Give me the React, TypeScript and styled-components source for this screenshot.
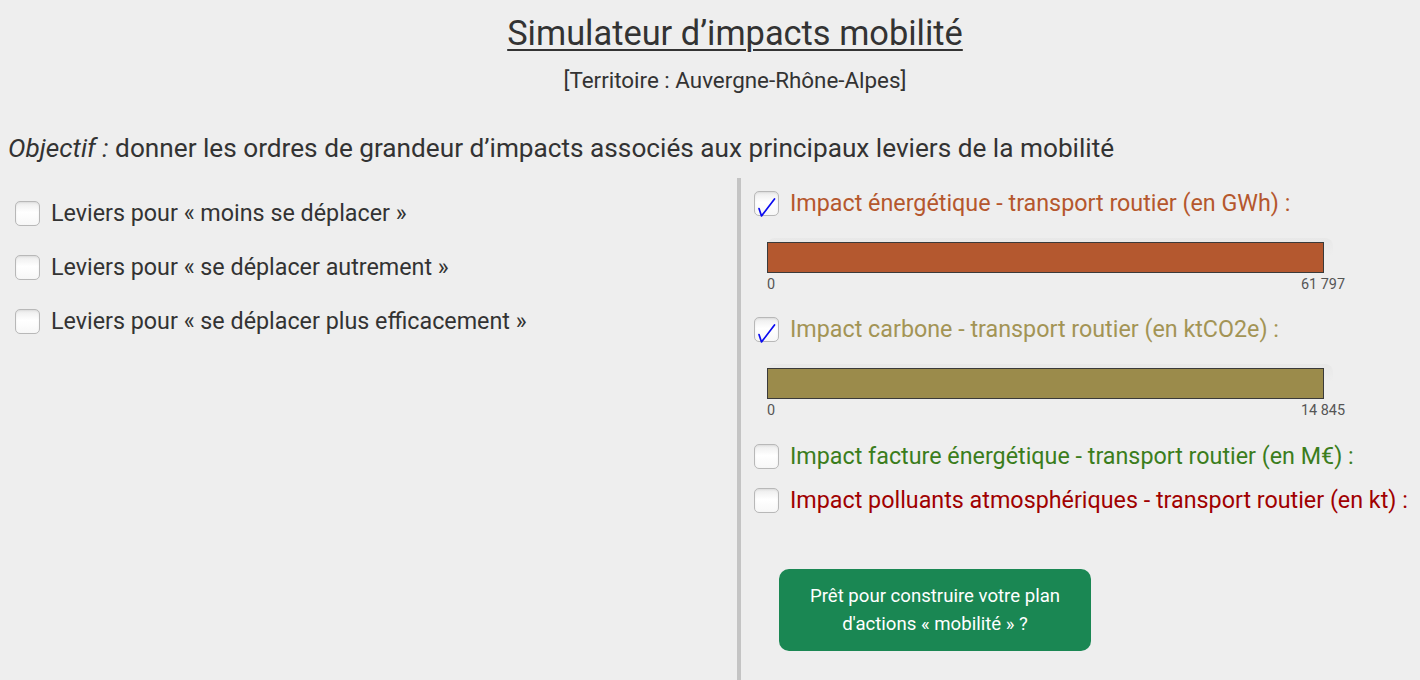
import styled, { createGlobalStyle } from "styled-components";

const GlobalStyle = createGlobalStyle`
  html, body {
    margin: 0;
    background: #eeeeee;
    font-family: Roboto, "Liberation Sans", sans-serif;
    color: #333333;
  }
`;

const Page = styled.div`
  width: 1420px;
  height: 680px;
  overflow: hidden;
  display: flex;
  flex-direction: column;
`;

const Header = styled.header`
  text-align: center;
  padding: 13px 0 0 50px;
`;

const Title = styled.h1`
  margin: 0;
  font-size: 34.4px;
  line-height: 40px;
  font-weight: 400;
  text-decoration: underline;
  text-decoration-thickness: 2px;
  text-underline-offset: 4px;
`;

const Territory = styled.p`
  margin: 14px 0 0;
  font-size: 22.4px;
  line-height: 26px;
`;

const Objective = styled.p`
  margin: 40px 0 0;
  padding-left: 8px;
  font-size: 26.2px;
  line-height: 30px;
  em {
    font-style: italic;
  }
`;

const Main = styled.div`
  flex: 1;
  margin-top: 15px;
  display: grid;
  grid-template-columns: 737px 4px 1fr;
`;

const LeftCol = styled.div`
  padding: 22px 0 0 15px;
  display: flex;
  flex-direction: column;
  gap: 28px;
`;

const Divider = styled.div`
  background: #c4c4c4;
`;

const RightCol = styled.div`
  padding: 12px 0 0 13px;
  display: flex;
  flex-direction: column;
`;

const Row = styled.label<{ $color?: string }>`
  display: flex;
  align-items: center;
  gap: 11px;
  font-size: 23.3px;
  line-height: 26px;
  white-space: nowrap;
  color: ${(p) => p.$color ?? "#333333"};
`;

const Box = styled.span`
  position: relative;
  width: 23px;
  height: 23px;
  flex: none;
  border: 1px solid #b8b8b8;
  border-radius: 5px;
  background: linear-gradient(#ececec, #ffffff 45%, #f7f7f7);
  box-shadow: inset 0 1px 2px rgba(0, 0, 0, 0.08);
`;

const Tick = styled.svg`
  position: absolute;
  left: -1px;
  top: -1px;
  overflow: visible;
`;

const Chart = styled.div`
  width: 578px;
  margin: 22px 0 0 13px;
`;

const Track = styled.div`
  width: 566px;
  padding: 4px 0 0;
  border-radius: 8px 8px 0 0;
  background: linear-gradient(#e8e8e8, #eeeeee 50%);
`;

const Bar = styled.div<{ $fill: string }>`
  width: 555px;
  height: 29px;
  border: 1px solid #3a3a3a;
  background: ${(p) => p.$fill};
`;

const Scale = styled.div`
  display: flex;
  justify-content: space-between;
  margin-top: 4px;
  font-size: 14.4px;
  line-height: 16px;
  color: #555555;
`;

const Button = styled.button`
  margin: 56px 0 0 25px;
  width: 312px;
  height: 82px;
  border: none;
  border-radius: 10px;
  background: #1a8753;
  color: #ffffff;
  font-family: Roboto, "Liberation Sans", sans-serif;
  font-size: 18.6px;
  line-height: 28px;
  padding: 0 16px;
`;

const Check = ({ checked }: { checked?: boolean }) => (
  <Box>
    {checked && (
      <Tick width="25" height="25" viewBox="0 0 25 25">
        <path
          d="M5 17.5 L7.5 25 L20.5 8"
          fill="none"
          stroke="#0a0af0"
          strokeWidth="1.7"
          strokeLinecap="round"
          strokeLinejoin="round"
        />
      </Tick>
    )}
  </Box>
);

const levers = [
  "Leviers pour « moins se déplacer »",
  "Leviers pour « se déplacer autrement »",
  "Leviers pour « se déplacer plus efficacement »",
];

type Impact = {
  label: string;
  color: string;
  checked: boolean;
  gap: number;
  fill?: string;
  max?: string;
};

const impacts: Impact[] = [
  {
    label: "Impact énergétique - transport routier (en GWh) :",
    color: "#b5572d",
    checked: true,
    gap: 0,
    fill: "#b4582f",
    max: "61 797",
  },
  {
    label: "Impact carbone - transport routier (en ktCO2e) :",
    color: "#a39455",
    checked: true,
    gap: 23,
    fill: "#9b8b4b",
    max: "14 845",
  },
  {
    label: "Impact facture énergétique - transport routier (en M€) :",
    color: "#3b7d1c",
    checked: false,
    gap: 24,
  },
  {
    label: "Impact polluants atmosphériques - transport routier (en kt) :",
    color: "#a00000",
    checked: false,
    gap: 18,
  },
];

const ImpactBlock = styled.div<{ $gap: number }>`
  margin-top: ${(p) => p.$gap}px;
`;

export default function App() {
  return (
    <Page>
      <GlobalStyle />
      <Header>
        <Title>Simulateur d’impacts mobilité</Title>
        <Territory>[Territoire : Auvergne-Rhône-Alpes]</Territory>
      </Header>
      <Objective>
        <em>Objectif :</em> donner les ordres de grandeur d’impacts associés
        aux principaux leviers de la mobilité
      </Objective>
      <Main>
        <LeftCol>
          {levers.map((l) => (
            <Row key={l}>
              <Check />
              {l}
            </Row>
          ))}
        </LeftCol>
        <Divider />
        <RightCol>
          {impacts.map((im) => (
            <ImpactBlock key={im.label} $gap={im.gap}>
              <Row $color={im.color}>
                <Check checked={im.checked} />
                {im.label}
              </Row>
              {im.fill && (
                <Chart>
                  <Track>
                    <Bar $fill={im.fill} />
                  </Track>
                  <Scale>
                    <span>0</span>
                    <span>{im.max}</span>
                  </Scale>
                </Chart>
              )}
            </ImpactBlock>
          ))}
          <Button>
            Prêt pour construire votre plan d'actions « mobilité » ?
          </Button>
        </RightCol>
      </Main>
    </Page>
  );
}
